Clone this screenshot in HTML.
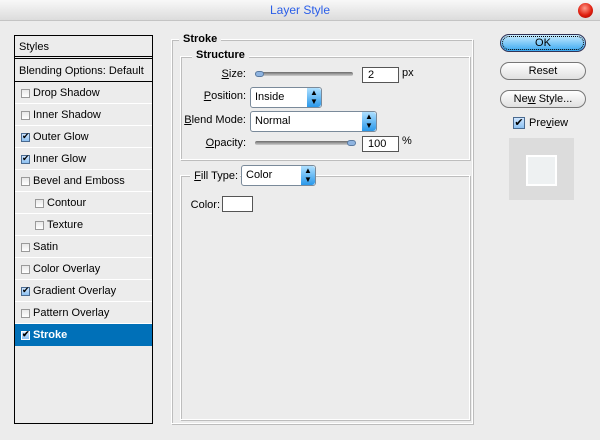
<!DOCTYPE html>
<html><head><style>
*{margin:0;padding:0;box-sizing:border-box}
body{width:600px;height:440px;background:#ececec;font-family:"Liberation Sans",Arial,sans-serif;font-size:11px;color:#000;position:relative;overflow:hidden;white-space:nowrap}
.a{position:absolute}
#title{left:0;top:0;width:600px;height:21px;background:linear-gradient(#f8f8f8,#dcdcdc);border-bottom:1px solid #c4c4c4;text-align:center;color:#2a5ee8;font-size:12px;line-height:21px}
#close{left:578px;top:3px;width:15px;height:15px;border-radius:50%;background:radial-gradient(circle at 45% 35%,#ff9a8a,#e02010 55%,#900 100%)}
#list{left:14px;top:35px;width:139px;height:389px;border:1px solid #000;background:#ececec}
.row{position:absolute;left:0;width:137px;height:22px;line-height:22px;border-bottom:1px solid #fff;padding-left:18px;font-size:11px}
.cb{position:absolute;left:6px;top:7px;width:9px;height:9px;border:1px solid #9a9a9a;background:linear-gradient(#e8e8e8,#fff)}
.cb.on{border-color:#4a6a90;background:linear-gradient(#cfe6ff,#8cc0f0)}
.cb.on:after{content:"✔";position:absolute;left:0;top:-5px;font-size:9px;line-height:14px;color:#000}
.gb{border:1px solid #fff;box-shadow:inset 1px 1px 0 #bdbdbd, 1px 1px 0 #bdbdbd}
.lbl{background:#ececec;padding:0 4px;font-weight:bold;font-size:11px}
.sel{border:1px solid #7a8a9a;border-radius:3px;background:#fff;height:21px;line-height:19px;padding-left:4px;font-size:11px}
.sel i{position:absolute;right:0;top:0;width:14px;height:19px;background:linear-gradient(#aee0ff,#2a98ea);border-radius:0 3px 3px 0;font-style:normal;font-size:8px;line-height:9px;text-align:center}
.inp{border:1px solid #555;background:#fff;height:16px;line-height:14px;padding-left:5px;font-size:11px}
.slider{height:4px;border-radius:2px;background:linear-gradient(#6a6a6a,#cfcfcf)}
.knob{width:9px;height:6px;border-radius:3px;background:#8fb4e0;border:1px solid #5a7aa0}
.btn{left:500px;width:86px;height:18px;border:1px solid #777;border-radius:9px;background:linear-gradient(#fff,#e0e0e0);text-align:center;line-height:16px;font-size:11px}
.r{text-align:right;font-size:11px}
</style></head><body>
<div id="title" class="a">Layer Style</div>
<div id="close" class="a"></div>

<div id="list" class="a">
<div class="row" style="top:0;height:23px;padding-left:4px;line-height:22px;border-bottom:3px double #000">Styles</div>
<div class="row" style="top:25px;height:21px;padding-left:4px;line-height:21px;border-bottom:1px solid #000">Blending Options: Default</div>
<div class="row" style="top:46px"><span class="cb"></span>Drop Shadow</div>
<div class="row" style="top:68px"><span class="cb"></span>Inner Shadow</div>
<div class="row" style="top:90px"><span class="cb on"></span>Outer Glow</div>
<div class="row" style="top:112px"><span class="cb on"></span>Inner Glow</div>
<div class="row" style="top:134px"><span class="cb"></span>Bevel and Emboss</div>
<div class="row" style="top:156px;padding-left:32px"><span class="cb" style="left:20px"></span>Contour</div>
<div class="row" style="top:178px;padding-left:32px"><span class="cb" style="left:20px"></span>Texture</div>
<div class="row" style="top:200px"><span class="cb"></span>Satin</div>
<div class="row" style="top:222px"><span class="cb"></span>Color Overlay</div>
<div class="row" style="top:244px"><span class="cb on"></span>Gradient Overlay</div>
<div class="row" style="top:266px"><span class="cb"></span>Pattern Overlay</div>
<div class="row" style="top:288px;background:#0070b8;color:#fff;font-weight:bold;border-bottom:1px solid #0070b8"><span class="cb on" style="border-color:#fff"></span>Stroke</div>
</div>

<div class="a gb" style="left:171px;top:39px;width:302px;height:385px"></div>
<div class="a lbl" style="left:179px;top:33px">Stroke</div>
<div class="a gb" style="left:180px;top:56px;width:290px;height:104px"></div>
<div class="a lbl" style="left:192px;top:49px">Structure</div>

<div class="a r" style="left:196px;top:68px;width:50px"><u>S</u>ize:</div>
<div class="a slider" style="left:255px;top:72px;width:98px"></div>
<div class="a knob" style="left:255px;top:71px"></div>
<div class="a inp" style="left:362px;top:67px;width:37px">2</div>
<div class="a" style="left:402px;top:67px">px</div>

<div class="a r" style="left:186px;top:90px;width:60px"><u>P</u>osition:</div>
<div class="a sel" style="left:250px;top:87px;width:72px">Inside<i>▲<br>▼</i></div>

<div class="a r" style="left:176px;top:114px;width:70px"><u>B</u>lend Mode:</div>
<div class="a sel" style="left:250px;top:111px;width:127px">Normal<i>▲<br>▼</i></div>

<div class="a r" style="left:186px;top:137px;width:60px"><u>O</u>pacity:</div>
<div class="a slider" style="left:255px;top:141px;width:100px"></div>
<div class="a knob" style="left:347px;top:140px"></div>
<div class="a inp" style="left:362px;top:136px;width:37px">100</div>
<div class="a" style="left:402px;top:135px">%</div>

<div class="a gb" style="left:180px;top:175px;width:290px;height:245px"></div>
<div class="a" style="left:190px;top:168px;width:50px;height:16px;background:#ececec"></div>
<div class="a r" style="left:188px;top:170px;width:50px"><u>F</u>ill Type:</div>
<div class="a sel" style="left:241px;top:165px;width:75px">Color<i>▲<br>▼</i></div>
<div class="a r" style="left:186px;top:199px;width:34px">Color:</div>
<div class="a" style="left:222px;top:196px;width:31px;height:16px;border:1px solid #555;background:#fff"></div>

<div class="a btn" style="top:34px;background:linear-gradient(#c8ecff,#3aa8f0);border-color:#335;outline:1px dotted #000;outline-offset:-3px">OK</div>
<div class="a btn" style="top:62px">Reset</div>
<div class="a btn" style="top:90px">Ne<u>w</u> Style...</div>
<div class="a" style="left:513px;top:117px;width:12px;height:12px;border:1px solid #4a6a90;background:linear-gradient(#cfe6ff,#8cc0f0);font-size:11px;line-height:10px;text-align:center">✔</div>
<div class="a" style="left:529px;top:117px">Pre<u>v</u>iew</div>
<div class="a" style="left:509px;top:138px;width:65px;height:62px;background:#dcdcdc"></div>
<div class="a" style="left:526px;top:155px;width:31px;height:31px;background:#eef1f2;border:2px solid #fff"></div>
</body></html>
